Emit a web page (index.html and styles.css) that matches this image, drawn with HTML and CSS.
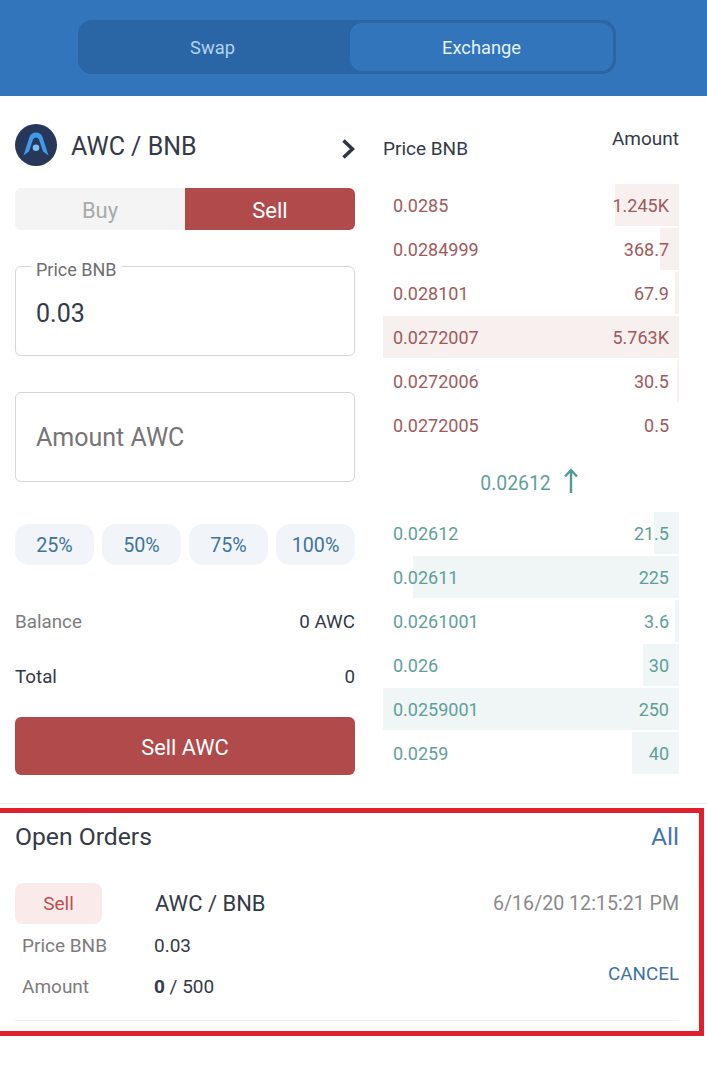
FILE: index.html
```html
<!DOCTYPE html>
<html lang="en">
<head>
    <meta charset="UTF-8">
    <meta name="viewport" content="width=device-width, initial-scale=1.0">
    <title>Exchange</title>
    <link rel="stylesheet" href="styles.css">
</head>
<body>
    <header class="top-bar">
        <div class="switch">
            <a class="switch-item" href="#">Swap</a>
            <a class="switch-item active" href="#">Exchange</a>
        </div>
    </header>

    <main class="trade">
        <section class="order-form">
            <div class="pair">
                <svg class="pair-logo" viewBox="0 0 42 42" aria-hidden="true">
                    <circle cx="21" cy="21" r="21" fill="#27375a"/>
                    <path d="M8.5 31.5 L14.5 13 Q16 8.5 21 8.5 Q26 8.5 27.5 13 L33.5 31.5 L28 27.5 L24 15.5 Q23 13.5 21 13.5 Q19 13.5 18 15.5 L14 27.5 Z" fill="#3f9be8"/>
                    <circle cx="21" cy="23.7" r="3.3" fill="#7cc0f5"/>
                </svg>
                <span class="pair-name">AWC / BNB</span>
                <svg class="chevron" viewBox="0 0 14 20" aria-hidden="true">
                    <path d="M2.5 1.5 L11.5 10 L2.5 18.5" fill="none" stroke="#2f3542" stroke-width="3.6"/>
                </svg>
            </div>

            <div class="side-tabs">
                <button class="side-tab">Buy</button>
                <button class="side-tab active">Sell</button>
            </div>

            <div class="field">
                <label class="field-label" for="price">Price BNB</label>
                <input class="field-input" id="price" type="text" value="0.03">
            </div>
            <div class="field">
                <input class="field-input" id="amount" type="text" placeholder="Amount AWC">
            </div>

            <div class="percents">
                <button class="percent">25%</button>
                <button class="percent">50%</button>
                <button class="percent">75%</button>
                <button class="percent">100%</button>
            </div>

            <div class="summary muted">
                <span>Balance</span>
                <span class="summary-value">0 AWC</span>
            </div>
            <div class="summary total">
                <span>Total</span>
                <span class="summary-value">0</span>
            </div>

            <button class="submit">Sell AWC</button>
        </section>

        <section class="book">
            <div class="book-head">
                <span class="book-price">Price BNB</span>
                <span class="book-amount">Amount</span>
            </div>

            <ul class="rows asks">
                <li class="row"><i class="bar" style="width: 64px"></i><span>0.0285</span><span>1.245K</span></li>
                <li class="row"><i class="bar" style="width: 19px"></i><span>0.0284999</span><span>368.7</span></li>
                <li class="row"><i class="bar" style="width: 4px"></i><span>0.028101</span><span>67.9</span></li>
                <li class="row"><i class="bar" style="width: 296px"></i><span>0.0272007</span><span>5.763K</span></li>
                <li class="row"><i class="bar" style="width: 2px"></i><span>0.0272006</span><span>30.5</span></li>
                <li class="row"><span>0.0272005</span><span>0.5</span></li>
            </ul>

            <div class="last-price">
                <span>0.02612</span>
                <svg class="arrow" viewBox="0 0 14 25" aria-hidden="true">
                    <path d="M7 25 V2 M1 8.5 L7 2 L13 8.5" fill="none" stroke="#4f9c96" stroke-width="2.4"/>
                </svg>
            </div>

            <ul class="rows bids">
                <li class="row"><i class="bar" style="width: 25px"></i><span>0.02612</span><span>21.5</span></li>
                <li class="row"><i class="bar" style="width: 266px"></i><span>0.02611</span><span>225</span></li>
                <li class="row"><i class="bar" style="width: 4px"></i><span>0.0261001</span><span>3.6</span></li>
                <li class="row"><i class="bar" style="width: 36px"></i><span>0.026</span><span>30</span></li>
                <li class="row"><i class="bar" style="width: 296px"></i><span>0.0259001</span><span>250</span></li>
                <li class="row"><i class="bar" style="width: 47px"></i><span>0.0259</span><span>40</span></li>
            </ul>
        </section>
    </main>

    <section class="orders">
        <div class="orders-head">
            <h2 class="orders-title">Open Orders</h2>
            <a class="orders-all" href="#">All</a>
        </div>
        <div class="order">
            <div class="order-top">
                <span class="order-side">Sell</span>
                <span class="order-pair">AWC / BNB</span>
                <span class="order-date">6/16/20 12:15:21 PM</span>
            </div>
            <div class="order-bottom">
                <dl class="order-info">
                    <dt>Price BNB</dt>
                    <dd>0.03</dd>
                    <dt>Amount</dt>
                    <dd><b>0</b> / 500</dd>
                </dl>
                <a class="order-cancel" href="#">CANCEL</a>
            </div>
        </div>
    </section>
</body>
</html>
```

FILE: styles.css
```css
* {
    box-sizing: border-box;
}
body {
    font-family: Roboto, "Liberation Sans", sans-serif;
    margin: 0;
    padding: 0;
    background: #fff;
    color: #343a46;
    font-size: 18px;
}
button {
    font-family: inherit;
    border: none;
    padding: 0;
}
a {
    text-decoration: none;
}
.top-bar {
    height: 96px;
    background: #3375bb;
    padding: 20px 0 0 78px;
}
.switch {
    width: 538px;
    height: 54px;
    padding: 3px;
    background: #2a65a6;
    border-radius: 14px;
    display: flex;
}
.switch-item {
    flex: 1;
    display: flex;
    align-items: center;
    justify-content: center;
    color: #b0d4ee;
    font-size: 18.3px;
    border-radius: 12px;
    padding-right: 6px;
}
.switch-item.active {
    flex: 0 0 263px;
    background: #3375bb;
    color: #e4f3fb;
    padding-right: 0;
}
.trade {
    display: grid;
    grid-template-columns: 340px 296px;
    column-gap: 28px;
    padding: 28px 0 0 15px;
    height: 708px;
    border-bottom: 1px solid #eee;
}
.pair {
    display: flex;
    align-items: center;
    height: 42px;
    margin-bottom: 22px;
}
.pair-logo {
    width: 42px;
    height: 42px;
}
.pair-name {
    margin-left: 14px;
    font-size: 25px;
    padding-top: 2px;
}
.chevron {
    width: 14px;
    height: 20px;
    margin-left: auto;
    margin-top: 8px;
}
.side-tabs {
    display: flex;
    height: 42px;
    margin-bottom: 36px;
    border-radius: 6px;
    overflow: hidden;
}
.side-tab {
    flex: 1;
    background: #f4f4f4;
    color: #aaa;
    font-size: 22px;
    padding-top: 3px;
}
.side-tab.active {
    background: #b14a4a;
    color: #fff;
}
.field {
    position: relative;
    height: 90px;
    margin-bottom: 36px;
}
.field-label {
    position: absolute;
    left: 16px;
    top: -7px;
    padding: 0 5px;
    background: #fff;
    color: #6f6f6f;
    font-size: 18px;
    line-height: 22px;
}
.field-input {
    width: 100%;
    height: 100%;
    padding: 0 20px;
    border: 1px solid #d6d6d6;
    border-radius: 6px;
    font-family: inherit;
    font-size: 25px;
    color: #343a46;
    outline: none;
}
#price {
    padding-top: 4px;
}
.field-input::placeholder {
    color: #757575;
    opacity: 1;
}
.percents {
    display: flex;
    gap: 8px;
    margin-top: 42px;
    margin-bottom: 35px;
}
.percent {
    flex: 1;
    height: 41px;
    background: #f1f5fa;
    color: #41749c;
    font-size: 19.7px;
    padding-top: 2px;
    border-radius: 14px;
}
.summary {
    display: flex;
    justify-content: space-between;
    align-items: center;
    height: 42px;
    font-size: 18.8px;
    padding-top: 2px;
}
.summary.muted {
    color: #7c7c7c;
    margin-bottom: 13px;
}
.summary-value {
    color: #343a46;
}
.submit {
    display: block;
    width: 100%;
    height: 58px;
    margin-top: 20px;
    background: #b14a4a;
    color: #fff;
    font-size: 21.8px;
    padding-top: 3px;
    border-radius: 6px;
}
.book-head {
    display: flex;
    justify-content: space-between;
    height: 60px;
    font-size: 19px;
}
.book-price {
    margin-top: 13px;
}
.book-amount {
    margin-top: 3px;
}
.rows {
    list-style: none;
    margin: 0;
    padding: 0;
    display: flex;
    flex-direction: column;
    gap: 2px;
}
.row {
    position: relative;
    height: 42px;
    padding: 0 10px;
    display: flex;
    justify-content: space-between;
    align-items: center;
}
.row span {
    position: relative;
}
.bar {
    position: absolute;
    top: 0;
    right: 0;
    bottom: 0;
}
.asks {
    color: #a05a5c;
}
.asks .bar {
    background: #f8f0ef;
}
.bids {
    color: #5f9f9a;
}
.bids .bar {
    background: #eff6f5;
}
.last-price {
    display: flex;
    justify-content: center;
    align-items: center;
    gap: 13px;
    height: 66px;
    padding-top: 8px;
    padding-right: 4px;
    color: #5f9f9a;
    font-size: 19.4px;
}
.arrow {
    width: 14px;
    height: 25px;
    margin-top: -5px;
}
.orders {
    width: 704px;
    height: 228px;
    margin-top: 4px;
    border: 5px solid #e0202c;
    border-left: none;
    padding: 0 20px 0 15px;
}
.orders-head {
    display: flex;
    justify-content: space-between;
    align-items: center;
    height: 36px;
    margin-top: 5px;
}
.orders-title {
    margin: 0;
    font-size: 24.7px;
    font-weight: 400;
}
.orders-all {
    color: #3f78ad;
    font-size: 24.7px;
}
.order {
    margin-top: 29px;
    height: 138px;
    border-bottom: 1px solid #eee;
}
.order-top {
    display: flex;
    align-items: center;
    height: 41px;
}
.order-side {
    width: 87px;
    height: 41px;
    display: flex;
    align-items: center;
    justify-content: center;
    background: #fbeaea;
    color: #c0504d;
    font-size: 19px;
    border-radius: 8px;
}
.order-pair {
    margin-left: 53px;
    font-size: 22px;
}
.order-date {
    margin-left: auto;
    color: #8a8a8a;
    font-size: 19.6px;
}
.order-bottom {
    display: flex;
    justify-content: space-between;
    align-items: center;
    font-size: 19px;
    padding-top: 1px;
}
.order-info {
    margin: 0;
    padding-left: 7px;
    display: grid;
    grid-template-columns: 132px auto;
    grid-auto-rows: 41px;
    align-items: center;
}
.order-info dt {
    color: #7c7c7c;
}
.order-info dd {
    margin: 0;
}
.order-cancel {
    color: #3f73a3;
    font-size: 18.8px;
    margin-top: 16px;
}
```
